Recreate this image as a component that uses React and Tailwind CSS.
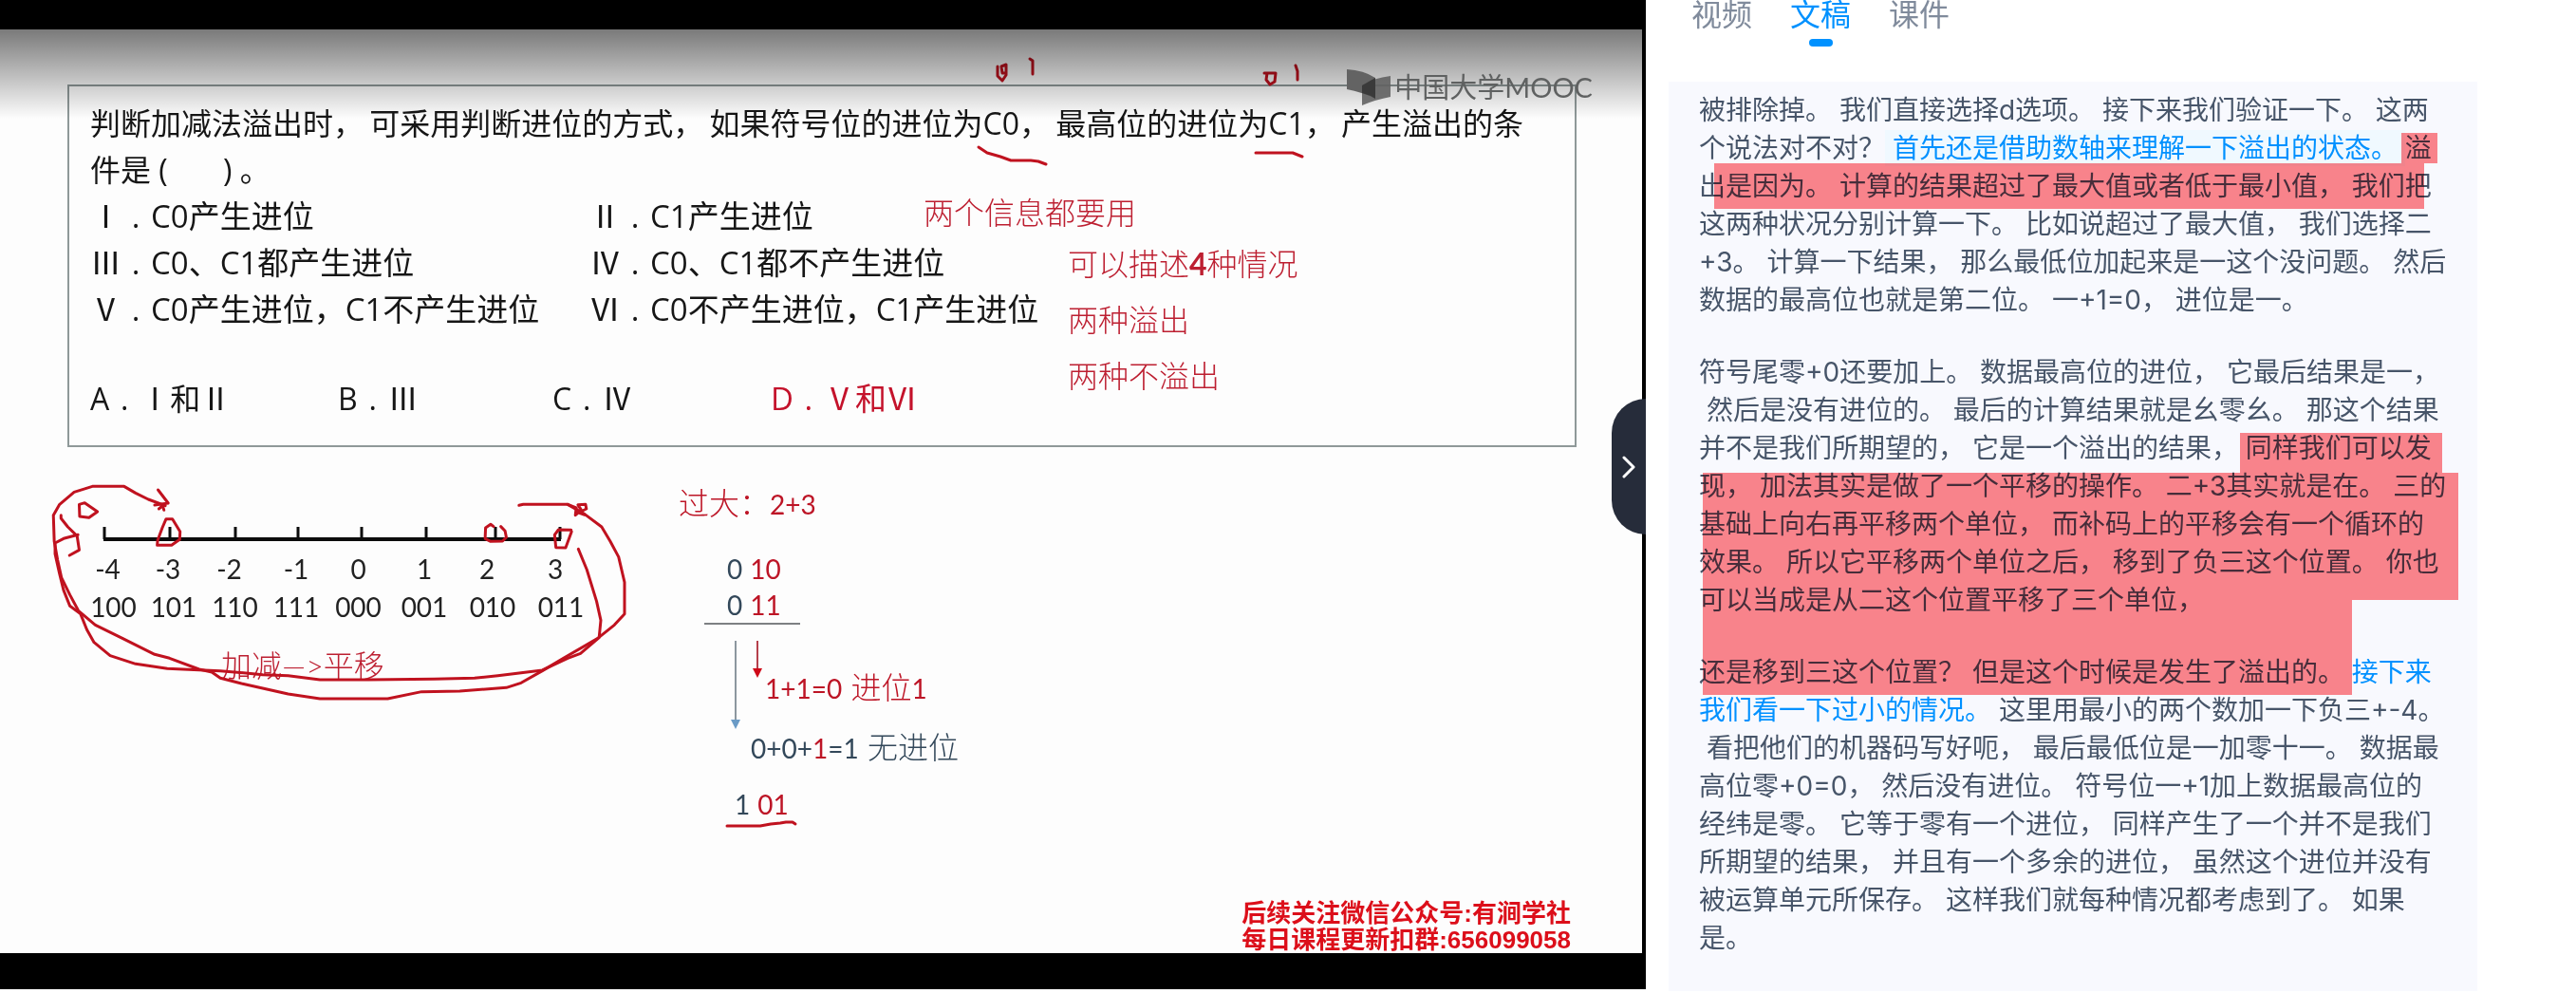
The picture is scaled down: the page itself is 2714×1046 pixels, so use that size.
const LABELS = ['-4', '-3', '-2', '-1', '0', '1', '2', '3'];
const CODES = ['100', '101', '110', '111', '000', '001', '010', '011'];

const SLIDE_FONT = "font-['Open_Sans','Noto_Sans_CJK_SC',sans-serif]";
const NOTE_FONT = "font-[Lato,'Noto_Sans_CJK_SC',sans-serif]";

function Dot() {
  return <span className="inline-block w-8 text-center">.</span>;
}

function Statement({ n, children }) {
  return (
    <li>
      <span className="inline-block w-8 text-center">{n}</span>
      <Dot />
      {children}
    </li>
  );
}

function Logo() {
  return (
    <div className="absolute top-[42px] right-[52px] flex items-center gap-1 text-[#5f6161]">
      <svg viewBox="0 0 46 38" className="h-[38px] w-[46px]" fill="currentColor">
        <path d="M0 0 Q18 1 30 9 V31 Q16 24 0 21 Z" fill="#636363" />
        <path d="M46 7 Q28 9 16 17 V38 Q30 32 46 29 Z" fill="#626262" opacity="0.9" />
        <path d="M30 9 L16 17 V25 Q24 27 30 31 Z" fill="#3a3a3a" />
      </svg>
      <span className={`text-[29px] leading-9 ${NOTE_FONT}`}>中国大学MOOC</span>
    </div>
  );
}

function QuestionCard() {
  return (
    <section
      className={`relative mt-[58px] mr-[69px] ml-[71px] border-2 border-[#8f9999] px-[22px] pt-[14px] pb-[25px] text-[32px] leading-[49px] text-[#161616] ${SLIDE_FONT}`}
    >
      <p className="mr-8 flex flex-wrap justify-between">
        <span>判断加减法溢出时，</span>
        <span>可采用判断进位的方式，</span>
        <span>如果符号位的进位为C0，</span>
        <span>最高位的进位为C1，</span>
        <span>产生溢出的条</span>
      </p>
      <p className="whitespace-pre">件是 (       ) 。</p>
      <ul className="grid grid-cols-[526px_1fr] text-[33px]">
        <Statement n="Ⅰ">C0产生进位</Statement>
        <Statement n="Ⅱ">C1产生进位</Statement>
        <Statement n="Ⅲ">C0、C1都产生进位</Statement>
        <Statement n="Ⅳ">C0、C1都不产生进位</Statement>
        <Statement n="Ⅴ">C0产生进位，C1不产生进位</Statement>
        <Statement n="Ⅵ">C0不产生进位，C1产生进位</Statement>
      </ul>
      <ul className="mt-[45px] grid grid-cols-[261px_226px_230px_1fr]">
        <li>A<Dot />Ⅰ和Ⅱ</li>
        <li>B<Dot />Ⅲ</li>
        <li>C<Dot />Ⅳ</li>
        <li className="text-[33px] text-[#c4122b]">D<Dot />Ⅴ和Ⅵ</li>
      </ul>

      <div className={`absolute top-[108px] left-[900px] font-light text-[#bd1f31] ${NOTE_FONT}`}>
        两个信息都要用
      </div>
      <div className={`absolute top-[157px] left-[1052px] leading-[59px] font-light text-[#bd1f31] ${NOTE_FONT}`}>
        <p>可以描述<b className="font-bold">4</b>种情况</p>
        <p>两种溢出</p>
        <p>两种不溢出</p>
      </div>
    </section>
  );
}

function NumberLine() {
  return (
    <figure className={`mt-[82px] ml-[88px] w-[540px] text-[28px] leading-10 text-[#222] ${NOTE_FONT}`}>
      <svg viewBox="0 0 540 20" className="h-5 w-full" fill="none" stroke="#0c0c0c">
        <path d="M21 15H503" strokeWidth="4" />
        <path d="M22 2V15M91 2V15M160 2V15M226 2V15M293 2V15M361 2V15M434 2V15M502 2V15" strokeWidth="3" />
      </svg>
      <div className="mt-[6px] grid grid-cols-[63px_64px_65px_64px_67px_72px_72px_72px]">
        {LABELS.map((t, i) => (
          <span key={t} className={i < 3 || i > 5 ? 'pr-3 text-center' : 'text-center'}>{t}</span>
        ))}
        {CODES.map((t) => (
          <span key={t} className="text-center">{t}</span>
        ))}
      </div>
      <figcaption className="mt-[22px] ml-[145px] text-[32px] font-light text-[#bd1f31]">加减—&gt;平移</figcaption>
    </figure>
  );
}

function Bits({ high, low }) {
  return (
    <div className="flex gap-2">
      <span className="text-[#33485a]">{high}</span>
      <span className="text-[#bd1526]">{low}</span>
    </div>
  );
}

function Working() {
  return (
    <div className={`mt-[39px] ml-[87px] text-[28px] text-[#bd1526] ${NOTE_FONT}`}>
      <p className="leading-10"><span className="text-[32px] font-light">过大：</span>2+3</p>
      <div className="mt-[29px] ml-[27px] w-[101px] border-b-2 border-[#7d8083] pl-6 leading-[38px]">
        <Bits high="0" low="10" />
        <Bits high="0" low="11" />
      </div>
      <div className="mt-[17px] ml-[53px] flex">
        <svg viewBox="0 0 23 92" className="h-[92px] w-[23px] overflow-visible">
          <path d="M7 0V84" stroke="#8c979f" strokeWidth="2" />
          <path d="M2 83H12L7 93Z" fill="#6a9bc6" />
          <path d="M30 0V30" stroke="#b5404c" strokeWidth="2" />
          <path d="M25 29H35L30 39Z" fill="#cf0818" />
        </svg>
        <div className="mt-[18px] leading-[61px]">
          <p className="ml-[15px]">1+1=0 <span className="text-[32px] font-light">&#8202;进位</span>1</p>
          <p className="text-[#33485a]">
            0+0+<span className="text-[#bd1526]">1</span>=1 <span className="text-[32px] font-light">&#8202;无进位</span>
          </p>
        </div>
      </div>
      <div className="mt-2 ml-[59px] leading-10"><Bits high="1" low="01" /></div>
    </div>
  );
}

/* Freehand pen marks over the slide. */
function PenMarks() {
  return (
    <svg
      viewBox="0 31 1730 973"
      className="pointer-events-none absolute top-0 left-0 h-[973px] w-[1730px]"
      fill="none"
      stroke="#c0121f"
      strokeWidth="3"
      strokeLinecap="round"
      strokeLinejoin="round"
    >
      <g transform="translate(0 480) scale(0.4464 0.3333)">
        <path vectorEffect="non-scaling-stroke" d="M390 158 L350 138 L320 118 L293 97 H218 L175 115 L140 155 L126 188 L128 270 L136 330 L145 385 L165 440 L185 490 L225 535 L290 578 L365 628 L400 640 L470 675 L500 684 L520 703 L570 720 L620 735 L680 753 L755 768 H915 L995 746 L1085 744 L1195 733 L1230 718 L1280 680 L1330 640 L1410 578 L1450 535 L1474 500 V400 L1460 320 L1440 270 L1420 225 L1380 185 L1340 154 H1235 L1225 157" />
        <path vectorEffect="non-scaling-stroke" d="M1365 295 L1385 360 L1408 460 L1418 520 L1414 575 L1370 625 L1340 640 L1280 678 L1175 695 L1120 703 L1025 706 L870 708 H755 L680 695 L620 692 L520 680 L395 673 L320 658 L260 632 L222 590 L205 550 L190 500 L165 475 L150 425 L140 370 L130 310 V276 L150 262 L184 250" />
        <path vectorEffect="non-scaling-stroke" d="M373 108 L397 150 L365 156 M375 168 L384 158 L387 172 M144 188 V198 L160 225 L182 254 L187 298 L164 315" />
        <path vectorEffect="non-scaling-stroke" d="M187 154 L200 149 L230 177 L210 196 L188 192 Z M392 200 H407 L425 240 L424 265 L405 283 H371 L372 268 L383 228 Z" />
        <path vectorEffect="non-scaling-stroke" d="M1165 224 L1158 217 L1146 228 L1145 262 L1158 271 L1186 270 L1195 258 L1192 238 L1182 224 M1348 235 L1318 234 L1309 250 L1312 290 L1335 291 L1349 240 M1340 154 L1360 165 L1358 188 L1372 172 L1364 155 L1382 154 L1384 168 L1366 180 L1380 187" />
      </g>
      <path d="M1031 155 L1040 161 L1054 165 L1065 169 H1086 L1094 170 L1102 173 M1323 161 H1355 L1362 161 L1372 165" />
      <path d="M1051 70 V80 L1056 85 L1060 79 V68 L1055 70 L1056 77 H1060 M1085 62 L1088 64 V78 M1332 77 H1344 L1343 86 L1338 89 L1334 84 L1335 77 M1365 69 L1367 75 V84" />
      <path d="M766 870 H801 L812 868 L822 867 L828 866 H835 L838 868" />
    </svg>
  );
}

function Slide() {
  return (
    <div className="relative mr-1 flex min-h-[973px] flex-col bg-[#fdfdfd]">
      <QuestionCard />
      <div className="flex items-start">
        <NumberLine />
        <Working />
      </div>
      <footer className="mt-auto self-end pr-[75px] text-right font-['Liberation_Sans','Noto_Sans_CJK_SC',sans-serif] text-[26px] leading-7 font-bold text-[#dc0f1a]">
        <p>后续关注微信公众号:有涧学社</p>
        <p>每日课程更新扣群:656099058</p>
      </footer>
      <PenMarks />
      <div className="pointer-events-none absolute inset-x-0 top-0 h-[94px] bg-linear-to-b from-black/52 to-transparent" />
      <Logo />
    </div>
  );
}

const Blue = ({ children }) => <span className="text-[#0091ff]">{children}</span>;
const Hit = ({ children }) => (
  <span className="bg-[#f0f9ff] py-[2px] pl-2 -ml-2 text-[#0091ff]">{children}</span>
);

const PARAGRAPHS = [
  [
    '被排除掉。 我们直接选择d选项。 接下来我们验证一下。 这两',
    <>个说法对不对？ <Hit>首先还是借助数轴来理解一下溢出的状态。 </Hit>溢</>,
    '出是因为。 计算的结果超过了最大值或者低于最小值， 我们把',
    '这两种状况分别计算一下。 比如说超过了最大值， 我们选择二',
    '+3。 计算一下结果， 那么最低位加起来是一这个没问题。 然后',
    '数据的最高位也就是第二位。 一+1=0， 进位是一。',
  ],
  [
    '符号尾零+0还要加上。 数据最高位的进位， 它最后结果是一，',
    ' 然后是没有进位的。 最后的计算结果就是幺零幺。 那这个结果',
    '并不是我们所期望的， 它是一个溢出的结果， 同样我们可以发',
    '现， 加法其实是做了一个平移的操作。 二+3其实就是在。 三的',
    '基础上向右再平移两个单位， 而补码上的平移会有一个循环的',
    '效果。 所以它平移两个单位之后， 移到了负三这个位置。 你也',
    '可以当成是从二这个位置平移了三个单位，',
  ],
  [
    <>还是移到三这个位置？ 但是这个时候是发生了溢出的。 <Blue>接下来</Blue></>,
    <><Blue>我们看一下过小的情况。</Blue> 这里用最小的两个数加一下负三+-4。</>,
    ' 看把他们的机器码写好呃， 最后最低位是一加零十一。 数据最',
    '高位零+0=0， 然后没有进位。 符号位一+1加上数据最高位的',
    '经纬是零。 它等于零有一个进位， 同样产生了一个并不是我们',
    '所期望的结果， 并且有一个多余的进位， 虽然这个进位并没有',
    '被运算单元所保存。 这样我们就每种情况都考虑到了。 如果',
    '是。',
  ],
];

/* Marker rectangles laid over the transcript. */
const MARKS = [
  'top-[54px] left-[772px] h-[32px] w-[38px]',
  'top-[86px] left-[48px] h-[48px] w-[748px]',
  'top-[370px] left-[602px] h-[42px] w-[213px]',
  'top-[412px] left-[36px] h-[134px] w-[796px]',
  'top-[546px] left-[36px] h-[100px] w-[684px]',
];

function Tab({ active, children }) {
  return (
    <button
      role="tab"
      aria-selected={!!active}
      className={`flex flex-col items-center text-[32px] leading-8 ${active ? 'text-[#0091ff]' : 'text-[#808b9c]'}`}
    >
      {children}
      {active && <span className="mt-[9px] h-2 w-[25px] rounded-full bg-[#0091ff]" />}
    </button>
  );
}

export default function App() {
  return (
    <main className="flex items-start bg-white font-[Inter,'Noto_Sans_CJK_SC',sans-serif]">
      <section className="relative flex-1 bg-black pt-[31px] pb-[38px]">
        <Slide />
        <button
          aria-label="收起"
          className="absolute top-[420px] right-0 flex h-[143px] w-9 items-center justify-center rounded-l-[36px] bg-[#262c3a]"
        >
          <svg viewBox="0 0 14 24" className="h-6 w-[14px]" fill="none" stroke="#fff" strokeWidth="3" strokeLinecap="round" strokeLinejoin="round">
            <path d="M2 2 L12 12 L2 22" />
          </svg>
        </button>
      </section>

      <aside className="w-[980px] pr-[104px] pl-6">
        <div role="tablist" className="flex h-[86px] items-start gap-10 pl-6">
          <Tab>视频</Tab>
          <Tab active>文稿</Tab>
          <Tab>课件</Tab>
        </div>
        <article className="relative flex flex-col gap-9 bg-[#f8f9fe] px-8 pt-[10px] pb-9 text-[28px] leading-10 whitespace-pre text-[#475569]">
          {PARAGRAPHS.map((lines, i) => (
            <p key={i}>
              {lines.map((line, j) => (
                <span key={j} className="block">{line}</span>
              ))}
            </p>
          ))}
          {MARKS.map((place) => (
            <span key={place} className={`pointer-events-none absolute bg-[#ff868c] mix-blend-multiply ${place}`} />
          ))}
        </article>
      </aside>
    </main>
  );
}
